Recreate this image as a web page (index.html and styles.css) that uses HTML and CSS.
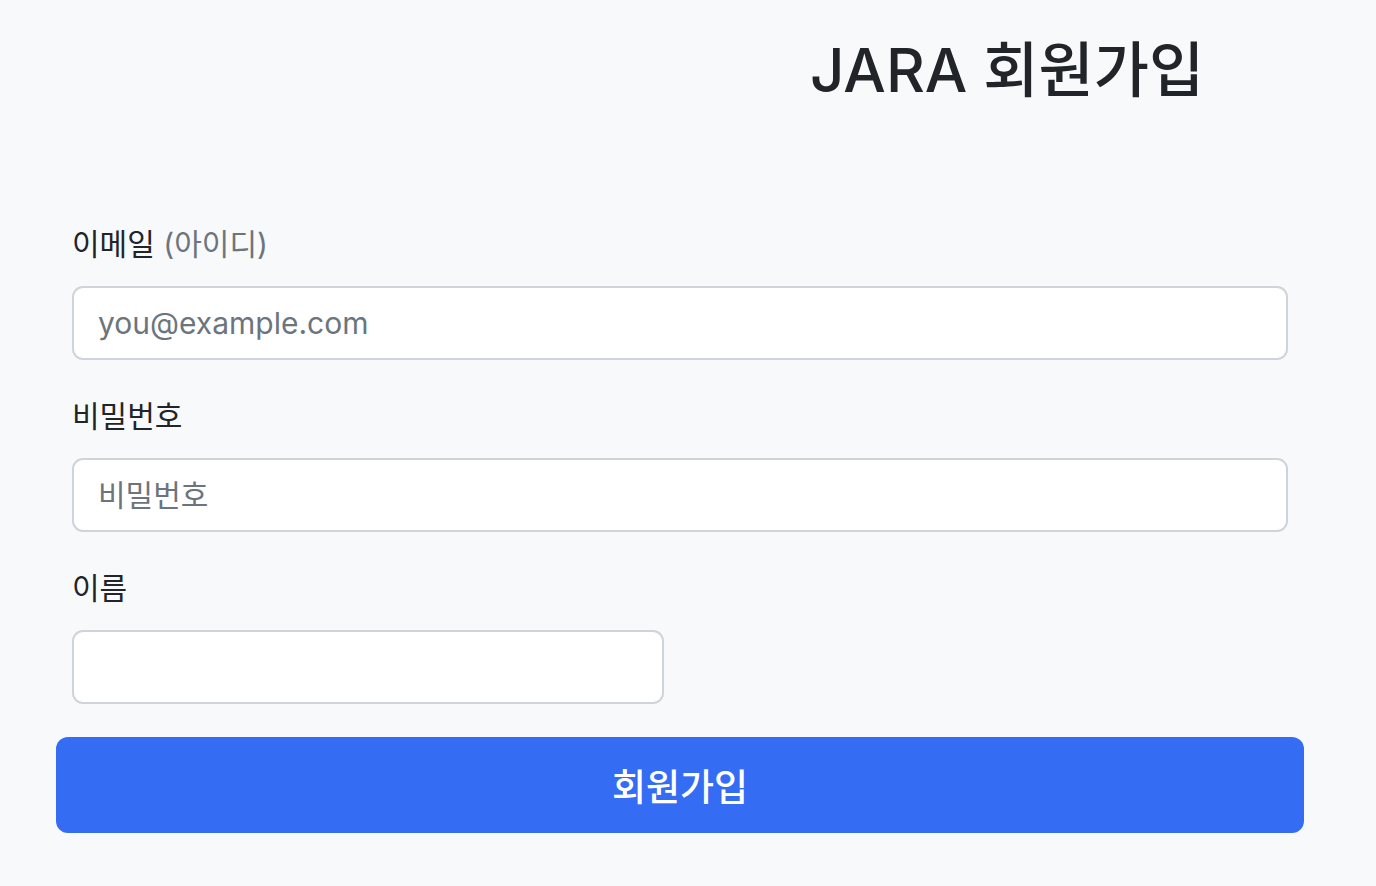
FILE: index.html
```html
<!DOCTYPE html>
<html lang="ko">
<head>
<meta charset="utf-8">
<title>JARA 회원가입</title>
<link rel="stylesheet" href="styles.css">
</head>
<body>
<main class="page">
  <h1 class="title">JARA 회원가입</h1>
  <form class="form">
    <div class="fields">
      <div class="field field-wide">
        <label class="label" for="email">이메일 <span class="muted">(아이디)</span></label>
        <input class="input" id="email" type="email" placeholder="you@example.com">
      </div>
      <div class="field field-wide">
        <label class="label" for="pw">비밀번호</label>
        <input class="input" id="pw" type="password" placeholder="비밀번호">
      </div>
      <div class="field field-last">
        <label class="label" for="name">이름</label>
        <input class="input" id="name" type="text">
      </div>
    </div>
    <button class="submit" type="button">회원가입</button>
  </form>
</main>
</body>
</html>
```

FILE: styles.css
```css
html, body {
  margin: 0;
  padding: 0;
  background: #f8f9fa;
}
body {
  font-family: Inter, "Noto Sans CJK KR", sans-serif;
  color: #212529;
}
.page {
  width: 1248px;
  padding: 34px 0 0 56px;
}
.title {
  margin: 0;
  padding-left: 754px;
  font-size: 60px;
  line-height: 72px;
  font-weight: 500;
  color: #212529;
}
.form {
  margin-top: 116px;
}
.fields {
  display: grid;
  grid-template-columns: 1fr 1fr;
  column-gap: 32px;
  padding: 0 16px;
}
.field {
  margin-bottom: 34px;
}
.field-wide {
  grid-column: 1 / span 2;
}
.field-last {
  margin-bottom: 33px;
}
.label {
  display: block;
  font-size: 30px;
  line-height: 45px;
  margin-bottom: 19px;
  color: #212529;
}
.muted {
  color: #6c757d;
}
.input {
  display: block;
  box-sizing: border-box;
  width: 100%;
  height: 74px;
  margin: 0;
  padding: 0 24px;
  border: 2px solid #ced4da;
  border-radius: 11px;
  background: #fff;
  font-family: Inter, "Noto Sans CJK KR", sans-serif;
  font-size: 30px;
  color: #212529;
  outline: none;
}
.input::placeholder {
  color: #6c757d;
  opacity: 1;
}
.submit {
  display: block;
  width: 100%;
  height: 96px;
  margin: 0;
  padding: 0;
  border: none;
  border-radius: 12px;
  background: #346cf4;
  color: #fff;
  font-family: Inter, "Noto Sans CJK KR", sans-serif;
  font-size: 37px;
  font-weight: 500;
  cursor: pointer;
}
```
